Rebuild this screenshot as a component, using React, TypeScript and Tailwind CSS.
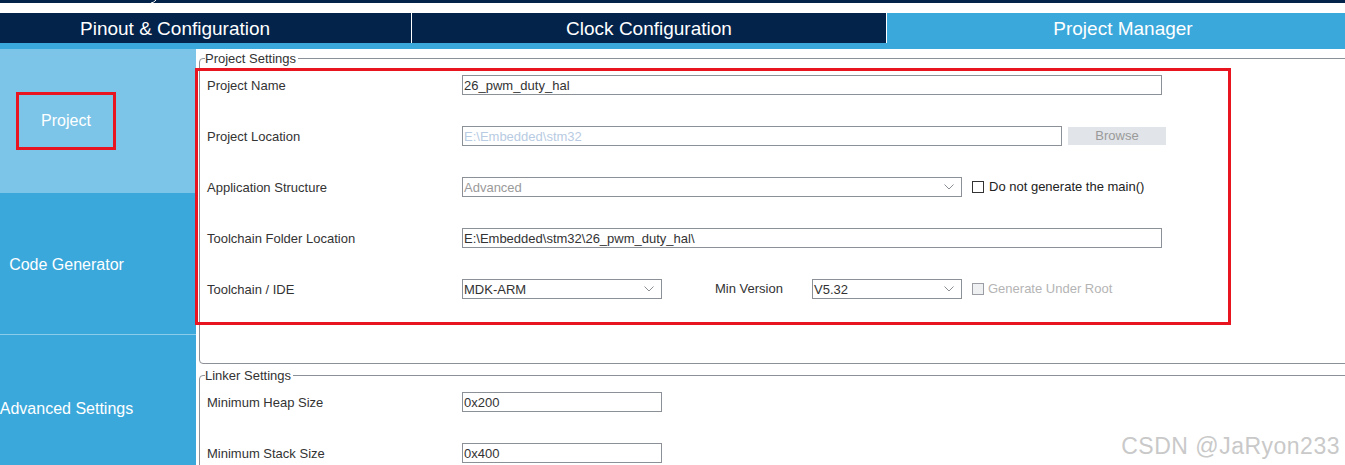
import React from "react";

const Chevron = () => (
  <svg width="10" height="6" viewBox="0 0 10 6" className="shrink-0">
    <polyline points="0.5,0.5 5,5 9.5,0.5" fill="none" stroke="#8a8f96" strokeWidth="1" />
  </svg>
);

function TextBox({ value, width, muted }: { value: string; width: string; muted?: boolean }) {
  return (
    <div
      className={`${width} h-[20px] border border-[#8c9197] bg-white px-[1px] flex items-center text-[13px] leading-none ${
        muted ? "text-[#b8cbe2]" : "text-[#333]"
      }`}
    >
      {value}
    </div>
  );
}

function SelectBox({ value, width, muted }: { value: string; width: string; muted?: boolean }) {
  return (
    <div
      className={`${width} h-[20px] border border-[#8c9197] bg-white pl-[1px] pr-[7px] flex items-center justify-between text-[13px] leading-none ${
        muted ? "text-[#9a9a9a]" : "text-[#333]"
      }`}
    >
      <span>{value}</span>
      <Chevron />
    </div>
  );
}

function Row({ label, children }: { label: string; children: React.ReactNode }) {
  return (
    <div className="flex items-center h-[20px]">
      <div className="w-[255px] shrink-0 text-[13px] text-[#333] pt-[1px]">{label}</div>
      {children}
    </div>
  );
}

export default function App() {
  return (
    <div className="relative w-[1345px] h-[465px] overflow-hidden bg-white font-['Liberation_Sans',Arial,sans-serif]">
      {/* window top strip */}
      <div className="h-[3px] bg-[#03234b] flex">
        <svg width="8" height="3" viewBox="0 0 8 3" className="ml-[150px]">
          <path d="M1 3 Q4 2.5 6 0" stroke="white" strokeWidth="1" fill="none" />
        </svg>
      </div>
      <div className="h-[10px] bg-white" />

      {/* main tabs */}
      <div className="flex h-[30px] bg-[#03234b] text-white text-[19px] leading-none">
        <div className="w-[412px] pl-[80px] pt-[1px] flex items-center border-r border-white">Pinout &amp; Configuration</div>
        <div className="w-[475px] pt-[1px] flex items-center justify-center border-r border-white">Clock Configuration</div>
        <div className="flex-1 pt-[1px] flex items-center justify-center bg-[#3aa8db] pl-[14px]">Project Manager</div>
      </div>
      <div className="h-[6px] bg-[#3aa8db]" />

      <div className="flex">
        {/* sidebar */}
        <div className="w-[196px] shrink-0 flex flex-col text-white text-[16px]">
          <div className="h-[144px] bg-[#7cc5e8] flex items-center pl-[16px]">
            <div className="w-[100px] h-[58px] border-[3px] border-[#e8141f] flex items-center justify-center">
              Project
            </div>
          </div>
          <div className="h-[141px] bg-[#3aa8db] flex items-center pt-[2px]">
            <div className="w-[133px] flex justify-center whitespace-nowrap">Code Generator</div>
          </div>
          <div className="h-[1px] bg-[#8ccbea]" />
          <div className="h-[140px] bg-[#3aa8db] flex items-center pt-[8px]">
            <div className="w-[133px] flex justify-center whitespace-nowrap">Advanced Settings</div>
          </div>
        </div>

        {/* content */}
        <div className="flex-1 pl-[3px] pt-[2px]">
          <fieldset className="w-[1170px] border border-[#8c9197] rounded-[4px] pl-[7px] pt-[9px] pb-[64px]">
            <legend className="ml-[-2px] pr-[2px] text-[13px] leading-[15px] text-[#333]">Project Settings</legend>
            <div className="flex flex-col gap-[31px]">
              <Row label="Project Name">
                <TextBox value="26_pwm_duty_hal" width="w-[700px]" />
              </Row>
              <Row label="Project Location">
                <TextBox value="E:\Embedded\stm32" width="w-[600px]" muted />
                <div className="ml-[6px] w-[98px] h-[18px] bg-[#e1e4e8] text-[#9a9a9a] text-[13px] flex items-center justify-center">
                  Browse
                </div>
              </Row>
              <Row label="Application Structure">
                <SelectBox value="Advanced" width="w-[500px]" muted />
                <div className="ml-[10px] w-[12px] h-[12px] border border-[#333] bg-white" />
                <span className="ml-[5px] text-[13px] text-[#222]">Do not generate the main()</span>
              </Row>
              <Row label="Toolchain Folder Location">
                <TextBox value="E:\Embedded\stm32\26_pwm_duty_hal\" width="w-[700px]" />
              </Row>
              <Row label="Toolchain / IDE">
                <SelectBox value="MDK-ARM" width="w-[200px]" />
                <span className="ml-[53px] w-[97px] text-[13px] text-[#333]">Min Version</span>
                <SelectBox value="V5.32" width="w-[150px]" />
                <div className="ml-[10px] w-[12px] h-[12px] border border-[#9a9ea4] bg-[#eef0f2]" />
                <span className="ml-[4px] text-[13px] text-[#b4b4b4]">Generate Under Root</span>
              </Row>
            </div>
          </fieldset>

          <fieldset className="mt-[4px] w-[1170px] border border-[#8c9197] rounded-[4px] pl-[7px] pt-[9px] pb-[20px]">
            <legend className="ml-[-2px] pr-[2px] text-[13px] leading-[15px] text-[#333]">Linker Settings</legend>
            <div className="flex flex-col gap-[31px]">
              <Row label="Minimum Heap Size">
                <TextBox value="0x200" width="w-[200px]" />
              </Row>
              <Row label="Minimum Stack Size">
                <TextBox value="0x400" width="w-[200px]" />
              </Row>
            </div>
          </fieldset>
        </div>
      </div>

      {/* annotation */}
      <div className="absolute left-[195px] top-[68px] w-[1036px] h-[257px] border-[3px] border-[#e8141f] pointer-events-none" />

      {/* watermark */}
      <div className="absolute right-[5px] top-[429px] text-[23px] tracking-[0.5px] text-[#c9c9c9] [text-shadow:0_0_1px_#ffffff] pointer-events-none">
        CSDN @JaRyon233
      </div>
    </div>
  );
}
